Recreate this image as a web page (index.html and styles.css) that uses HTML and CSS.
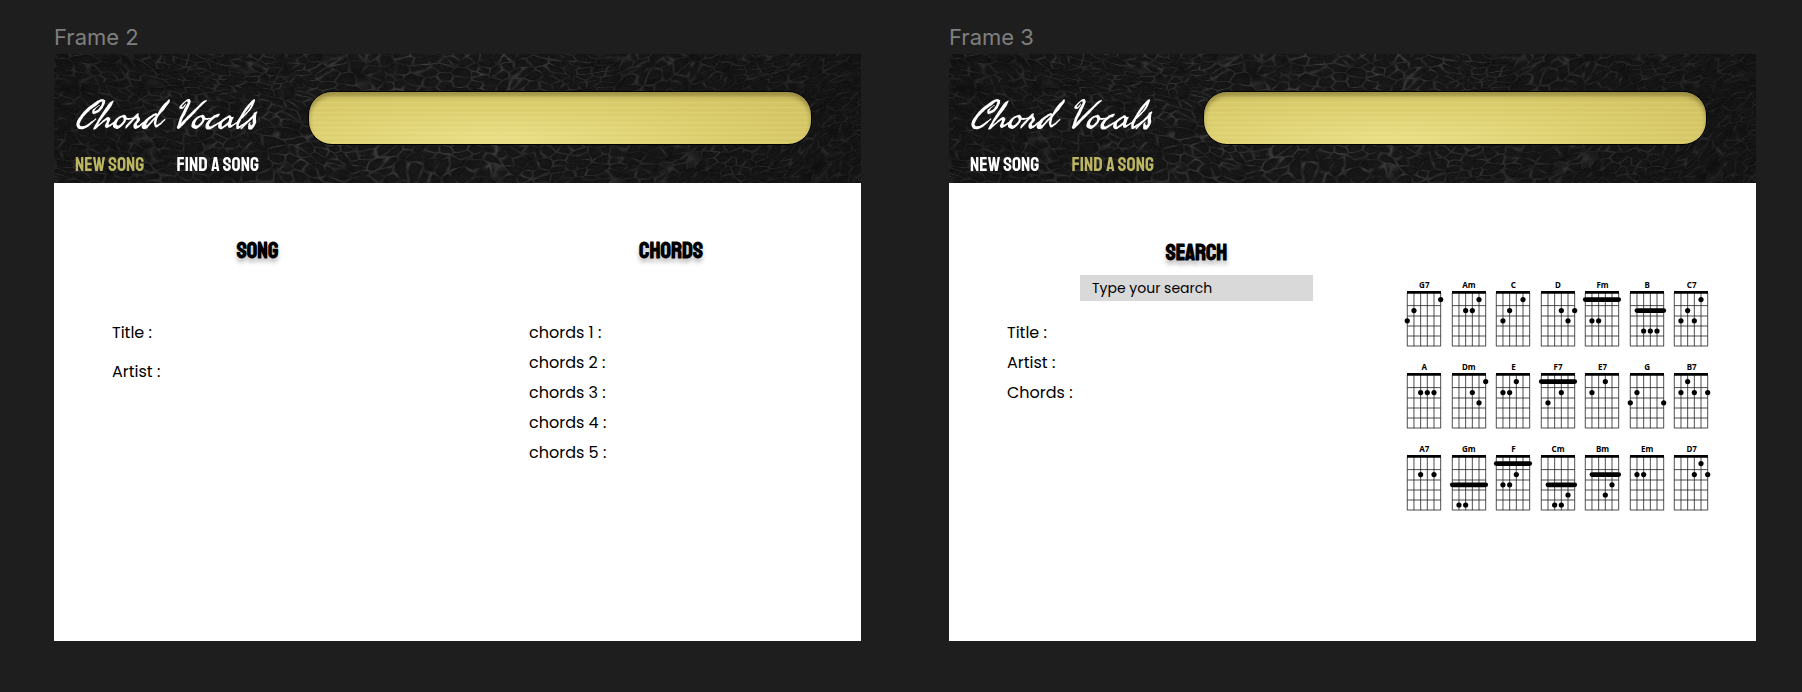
FILE: index.html
```html
<!DOCTYPE html>
<html lang="en">
<head>
<meta charset="utf-8">
<title>Chord Vocals</title>
<link rel="stylesheet" href="styles.css">
</head>
<body>
<main class="board">
  <section class="frame">
    <h2 class="frame-name">Frame 2</h2>
    <div class="screen">
      <header class="banner">
        <canvas class="leather"></canvas>
        <div class="brand">
          <h1 class="logo">Chord Vocals</h1>
          <nav class="nav">
            <a class="nav-link active" href="#new">NEW SONG</a>
            <a class="nav-link" href="#find">FIND A SONG</a>
          </nav>
        </div>
        <div class="plate"></div>
      </header>
      <form class="content new-song">
        <section>
          <h3 class="heading">SONG</h3>
          <div class="fields roomy">
            <label class="field">Title : <input class="entry" type="text"></label>
            <label class="field">Artist : <input class="entry" type="text"></label>
          </div>
        </section>
        <section>
          <h3 class="heading">CHORDS</h3>
          <div class="fields inset">
            <label class="field">chords 1 : <input class="entry" type="text"></label>
            <label class="field">chords 2 : <input class="entry" type="text"></label>
            <label class="field">chords 3 : <input class="entry" type="text"></label>
            <label class="field">chords 4 : <input class="entry" type="text"></label>
            <label class="field">chords 5 : <input class="entry" type="text"></label>
          </div>
        </section>
      </form>
    </div>
  </section>

  <section class="frame">
    <h2 class="frame-name">Frame 3</h2>
    <div class="screen">
      <header class="banner">
        <canvas class="leather"></canvas>
        <div class="brand">
          <h1 class="logo">Chord Vocals</h1>
          <nav class="nav">
            <a class="nav-link" href="#new">NEW SONG</a>
            <a class="nav-link active" href="#find">FIND A SONG</a>
          </nav>
        </div>
        <div class="plate"></div>
      </header>
      <div class="content find-song">
        <section>
          <div class="search">
            <h3 class="heading"><label for="search">SEARCH</label></h3>
            <input class="search-box" id="search" type="text" placeholder="Type your search">
          </div>
          <div class="fields results">
            <div class="field">Title :</div>
            <div class="field">Artist :</div>
            <div class="field">Chords :</div>
          </div>
        </section>
        <div class="charts" id="charts"></div>
      </div>
    </div>
  </section>
</main>
<script src="app.js"></script>
</body>
</html>
```
FILE: styles.css
```css
* {
  box-sizing: border-box;
}

body {
  margin: 0;
  background: #1e1e1e;
  color: #000;
  font-family: Poppins, Inter, sans-serif;
}

.board {
  display: grid;
  grid-template-columns: 1fr 1fr;
  gap: 88px;
  min-height: 100vh;
  padding: 22px 46px 51px 54px;
}

.frame {
  display: flex;
  flex-direction: column;
  min-width: 0;
}

.frame-name {
  margin: 0;
  height: 32px;
  color: #7f7f7f;
  font: 400 22px/30px Inter, sans-serif;
}

.screen {
  flex: 1;
  background: #fff;
}

.banner {
  position: relative;
  display: flex;
  align-items: flex-start;
  height: 129px;
  padding: 37px 49px 0 21px;
  background: #131313;
}

.leather {
  position: absolute;
  inset: 0;
  width: 100%;
  height: 100%;
}

.brand {
  position: relative;
  width: 233px;
  flex: none;
}

.logo {
  margin: 0;
  color: #fff;
  font: italic 400 39px/54px "Seaweed Script", "Damion", cursive;
  white-space: nowrap;
}

.nav {
  display: flex;
  gap: 32px;
  margin-top: 8px;
}

.nav-link {
  color: #fff;
  font: 400 20px/24px "Staatliches", "Bebas Neue", "Liberation Sans Narrow", sans-serif;
  text-decoration: none;
  white-space: nowrap;
}

.nav-link.active {
  color: #bdb661;
}

.plate {
  position: relative;
  flex: 1;
  height: 54px;
  border: 1px solid #000;
  border-radius: 24px;
  background:
    repeating-linear-gradient(180deg, rgba(255, 250, 180, 0.1) 0 1px, transparent 1px 3px, rgba(120, 100, 20, 0.03) 3px 4px, transparent 4px 5px),
    radial-gradient(ellipse at 38% 90%, #eadf88 0, #ddd071 45%, #cfc060 100%);
  box-shadow: inset 0 4px 4px rgba(50, 35, 0, 0.35);
}

.content {
  display: grid;
  padding-top: 52px;
}

.new-song {
  grid-template-columns: minmax(0, 407fr) minmax(0, 380fr);
  column-gap: 20px;
}

.find-song {
  grid-template-columns: 1fr 312px;
  padding-right: 42px;
}

.heading {
  margin: 0;
  font: 700 23px/32px "Staatliches", "Bebas Neue", "Liberation Sans Narrow", sans-serif;
  text-align: center;
  text-shadow: 0 4px 4px rgba(0, 0, 0, 0.25);
}

.fields {
  display: flex;
  flex-direction: column;
  padding: 51px 20px 0 58px;
}

.fields.roomy {
  gap: 9px;
}

.fields.inset {
  padding-left: 48px;
}

.fields.results {
  padding-top: 17px;
}

.field {
  display: flex;
  gap: 8px;
  font-size: 16px;
  line-height: 30px;
  white-space: nowrap;
}

.entry {
  flex: 1;
  min-width: 0;
  padding: 0;
  border: 0;
  outline: 0;
  background: transparent;
  font: inherit;
}

.search {
  width: 233px;
  margin-left: 131px;
  padding-top: 2px;
}

.search-box {
  display: block;
  width: 100%;
  height: 26px;
  margin-top: 6px;
  padding: 1px 12px 0;
  border: 0;
  background: #d9d9d9;
  color: #000;
  font: 400 14px/24px Poppins, Inter, sans-serif;
}

.search-box::placeholder {
  color: #000;
  opacity: 1;
}

.charts {
  display: grid;
  grid-template-columns: repeat(7, 1fr);
  row-gap: 12px;
  align-content: start;
  padding-top: 45px;
}

.chart {
  margin: 0;
}

.chart-name {
  font: 700 8px/10px "Noto Sans", sans-serif;
  text-align: center;
}

.chart-grid {
  display: block;
  width: 100%;
  height: 60px;
  overflow: visible;
}
```
FILE: app.js
```js
// Each chord: name, dots as [string, fret], optional barre as [first string, last string, fret].
const chords = [
  ["G7", [[5, 1], [1, 2], [0, 3]]],
  ["Am", [[4, 1], [2, 2], [3, 2]]],
  ["C", [[4, 1], [2, 2], [1, 3]]],
  ["D", [[3, 2], [5, 2], [4, 3]]],
  ["Fm", [[1, 3], [2, 3]], [0, 5, 1]],
  ["B", [[2, 4], [3, 4], [4, 4]], [1, 5, 2]],
  ["C7", [[4, 1], [2, 2], [1, 3], [3, 3]]],
  ["A", [[2, 2], [3, 2], [4, 2]]],
  ["Dm", [[5, 1], [3, 2], [4, 3]]],
  ["E", [[3, 1], [1, 2], [2, 2]]],
  ["F7", [[3, 2], [1, 3]], [0, 5, 1]],
  ["E7", [[3, 1], [1, 2]]],
  ["G", [[1, 2], [0, 3], [5, 3]]],
  ["B7", [[2, 1], [1, 2], [3, 2], [5, 2]]],
  ["A7", [[2, 2], [4, 2]]],
  ["Gm", [[1, 5], [2, 5]], [0, 5, 3]],
  ["F", [[3, 2], [1, 3], [2, 3]], [0, 5, 1]],
  ["Cm", [[4, 4], [2, 5], [3, 5]], [1, 5, 3]],
  ["Bm", [[4, 3], [3, 4]], [1, 5, 2]],
  ["Em", [[1, 2], [2, 2]]],
  ["D7", [[4, 1], [3, 2], [5, 2]]]
];

const stringX = s => 5 + s * 6.68;
const fretY = [0, 9.6, 20.6, 30.8, 41, 51];

function chart([name, dots, barre]) {
  let lines = "";
  for (let s = 0; s < 6; s++) lines += `M${stringX(s)} 3V56.2`;
  for (const y of [15.6, 26, 36, 46, 56]) lines += `M5 ${y}H38.4`;
  const bar = barre
    ? `<path d="M${stringX(barre[0])} ${fretY[barre[2]]}H${stringX(barre[1])}" stroke="#000" stroke-width="4.8" stroke-linecap="round"/>`
    : "";
  const marks = dots.map(([s, f]) => `<circle cx="${stringX(s)}" cy="${fretY[f]}" r="2.6"/>`).join("");
  return `<figure class="chart"><figcaption class="chart-name">${name}</figcaption>
    <svg class="chart-grid" viewBox="0 0 44 60" aria-hidden="true">
    <path d="${lines}" stroke="#222" stroke-width="0.8" fill="none"/>
    <path d="M4.7 2.4H38.7" stroke="#000" stroke-width="2.8"/>${bar}${marks}</svg></figure>`;
}

document.getElementById("charts").innerHTML = chords.map(chart).join("");

// Leather grain: creases are the borders of warped, jittered cells.
function hash(x, y, k) {
  let n = Math.imul(x, 374761393) + Math.imul(y, 668265263) + Math.imul(k, 1274126177);
  n = Math.imul(n ^ (n >>> 13), 1274126177);
  return ((n ^ (n >>> 16)) >>> 0) / 4294967296;
}

function noise(x, y, k) {
  const ix = Math.floor(x), iy = Math.floor(y);
  const fx = x - ix, fy = y - iy;
  const u = fx * fx * (3 - 2 * fx), v = fy * fy * (3 - 2 * fy);
  const a = hash(ix, iy, k), b = hash(ix + 1, iy, k);
  const c = hash(ix, iy + 1, k), d = hash(ix + 1, iy + 1, k);
  return a + (b - a) * u + (c - a) * v + (a - b - c + d) * u * v;
}

function drawLeather(canvas) {
  const w = canvas.width = canvas.clientWidth;
  const h = canvas.height = canvas.clientHeight;
  const ctx = canvas.getContext("2d");
  const image = ctx.createImageData(w, h);
  for (let y = 0; y < h; y++) {
    for (let x = 0; x < w; x++) {
      const t = x / w;
      const wx = x + noise(x / 9, y / 9, 2) * 4 + noise(x / 50, y / 40, 8) * 14;
      const wy = y + noise(x / 9, y / 9, 3) * 3 + noise(x / 60, y / 50, 9) * 24 - (x - w / 2) * (0.4 - t) * 0.35;
      const px = wx / 14, py = wy / 8;
      const cx = Math.floor(px), cy = Math.floor(py);
      let near = 9, next = 9;
      for (let j = -1; j < 2; j++) {
        for (let i = -1; i < 2; i++) {
          const dx = cx + i + hash(cx + i, cy + j, 4) - px;
          const dy = cy + j + hash(cx + i, cy + j, 5) - py;
          const d = Math.sqrt(dx * dx + dy * dy);
          if (d < near) { next = near; near = d; } else if (d < next) next = d;
        }
      }
      const crease = Math.max(0, 1 - (next - near) * 4);
      const centre = 1 - Math.abs(t - 0.45) * 1.3;
      const fade = noise(x / 7, y / 5, 6);
      const value = 17 + centre * 5 + crease * fade * (14 + centre * 34) - near * 9 + hash(x, y, 7) * 7;
      const p = (y * w + x) * 4;
      image.data[p] = image.data[p + 1] = value;
      image.data[p + 2] = value + 1;
      image.data[p + 3] = 255;
    }
  }
  ctx.putImageData(image, 0, 0);
}

document.querySelectorAll(".leather").forEach(drawLeather);
```
